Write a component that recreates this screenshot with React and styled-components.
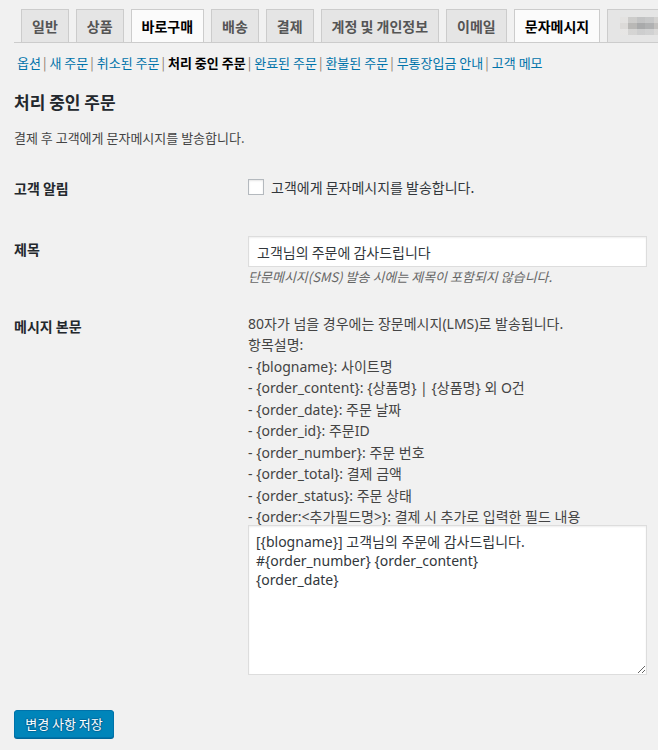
import React from 'react';
import styled, {createGlobalStyle} from 'styled-components';

const tabs = ['일반', '상품', '바로구매', '배송', '결제', '계정 및 개인정보', '이메일', '문자메시지'];
const activeTabs = ['바로구매', '문자메시지'];
const links = ['옵션', '새 주문', '취소된 주문', '처리 중인 주문', '완료된 주문', '환불된 주문', '무통장입금 안내', '고객 메모'];
const currentLink = '처리 중인 주문';

const fieldHelp = [
  ['{blogname}', '사이트명'],
  ['{order_content}', '{상품명} | {상품명} 외 O건'],
  ['{order_date}', '주문 날짜'],
  ['{order_id}', '주문ID'],
  ['{order_number}', '주문 번호'],
  ['{order_total}', '결제 금액'],
  ['{order_status}', '주문 상태'],
  ['{order:<추가필드명>}', '결제 시 추가로 입력한 필드 내용'],
];

const messageBody = '[{blogname}] 고객님의 주문에 감사드립니다.\n#{order_number} {order_content}\n{order_date}';

const App = () => {
  return (
    <Page>
      <GlobalStyle />
      <TabBar>
        {tabs.map((tab) => (
          <Tab key={tab} $active={activeTabs.includes(tab)}>
            {tab}
          </Tab>
        ))}
        <Tab>
          <Mosaic />
        </Tab>
      </TabBar>

      <SubNav>
        {links.map((link, index) => (
          <li key={link}>
            {link === currentLink ? <Current>{link}</Current> : <SubLink>{link}</SubLink>}
            {index < links.length - 1 && <Sep>|</Sep>}
          </li>
        ))}
      </SubNav>

      <Title>처리 중인 주문</Title>
      <Intro>결제 후 고객에게 문자메시지를 발송합니다.</Intro>

      <FormTable>
        <Row $pt={27}>
          <Th>고객 알림</Th>
          <Td>
            <CheckLabel>
              <CheckBox type="checkbox" />
              고객에게 문자메시지를 발송합니다.
            </CheckLabel>
          </Td>
        </Row>
        <Row $pt={36}>
          <Th>제목</Th>
          <Td>
            <TextInput defaultValue="고객님의 주문에 감사드립니다" />
            <Help>단문메시지(SMS) 발송 시에는 제목이 포함되지 않습니다.</Help>
          </Td>
        </Row>
        <Row $pt={28}>
          <Th>메시지 본문</Th>
          <Td>
            <Notes>
              <div>80자가 넘을 경우에는 장문메시지(LMS)로 발송됩니다.</div>
              <div>항목설명:</div>
              {fieldHelp.map(([key, desc]) => (
                <div key={key}>
                  - {key}: {desc}
                </div>
              ))}
            </Notes>
            <TextArea defaultValue={messageBody} />
          </Td>
        </Row>
      </FormTable>

      <Submit>
        <SaveButton>변경 사항 저장</SaveButton>
      </Submit>
    </Page>
  );
};
export default App;

const GlobalStyle = createGlobalStyle`
  html, body {
    margin: 0;
    background: #f1f1f1;
  }
  body {
    font-family: "Noto Sans", "Noto Sans CJK KR", sans-serif;
    font-size: 13px;
    color: #444;
  }
`;

const Page = styled.div`
  padding: 0 11px 0 14px;
  overflow: hidden;
`;

const TabBar = styled.nav`
  display: flex;
  flex-wrap: nowrap;
  padding-top: 9px;
  border-bottom: 1px solid #ccc;
  margin-right: -11px;
  overflow: hidden;
`;

const Tab = styled.span`
  flex: none;
  margin-left: 7px;
  margin-bottom: -1px;
  padding: 4px 10px;
  height: 24px;
  display: flex;
  align-items: center;
  font-family: "Noto Sans CJK KR", sans-serif;
  font-size: 14px;
  font-weight: 700;
  line-height: 24px;
  border: 1px solid #ccc;
  border-bottom-color: ${(p) => (p.$active ? '#fbfbfb' : '#ccc')};
  background: ${(p) => (p.$active ? '#fbfbfb' : '#e5e5e5')};
  color: ${(p) => (p.$active ? '#000' : '#555')};
`;

const Mosaic = styled.span`
  display: block;
  width: 60px;
  height: 18px;
  margin-left: 2px;
  background:
    linear-gradient(180deg, rgba(241, 241, 241, 0.35) 0 33%, transparent 33% 66%, rgba(241, 241, 241, 0.5) 66%),
    linear-gradient(90deg, #dcdad8 0 14%, #b9b8b6 14% 28%, #a9aaab 28% 42%, #b0b1b2 42% 56%, #c2c0be 56% 70%, #b8b7b5 70% 84%, #cfcecc 84%);
`;

const SubNav = styled.ul`
  list-style: none;
  display: flex;
  flex-wrap: wrap;
  margin: 10px 0 0 3px;
  padding: 0;
  font-family: "Noto Sans CJK KR", sans-serif;
  font-size: 13px;
  line-height: 20px;
`;

const SubLink = styled.a`
  color: #0073aa;
  text-decoration: none;
`;

const Current = styled.span`
  color: #000;
  font-weight: 700;
`;

const Sep = styled.span`
  color: #8a7a6a;
  margin: 0 3px 0 2px;
`;

const Title = styled.h2`
  margin: 17px 0 0;
  font-family: "Noto Sans CJK KR", sans-serif;
  font-size: 17px;
  font-weight: 700;
  line-height: 24px;
  color: #23282d;
`;

const Intro = styled.p`
  margin: 14px 0 0;
  font-family: "Noto Sans CJK KR", sans-serif;
  font-size: 13px;
  line-height: 20px;
  color: #444;
`;

const FormTable = styled.div`
  display: flex;
  flex-direction: column;
`;

const Row = styled.div`
  display: grid;
  grid-template-columns: 234px 1fr;
  padding-top: ${(p) => p.$pt}px;
`;

const Th = styled.div`
  padding-top: 1px;
  font-family: "Noto Sans CJK KR", sans-serif;
  font-size: 14px;
  font-weight: 700;
  line-height: 24px;
  color: #23282d;
`;

const Td = styled.div`
  display: flex;
  flex-direction: column;
  font-size: 14px;
  color: #444;
`;

const CheckLabel = styled.label`
  display: flex;
  align-items: center;
  gap: 7px;
  height: 24px;
  font-family: "Noto Sans CJK KR", sans-serif;
  font-size: 14px;
  color: #32373c;
`;

const CheckBox = styled.input`
  appearance: none;
  margin: 0;
  width: 16px;
  height: 16px;
  background: #fff;
  border: 1px solid #b4b9be;
  box-shadow: inset 0 1px 2px rgba(0, 0, 0, 0.1);
`;

const TextInput = styled.input`
  box-sizing: border-box;
  width: 100%;
  height: 31px;
  margin: 0;
  padding: 0 8px;
  background: #fff;
  border: 1px solid #ddd;
  box-shadow: inset 0 1px 2px rgba(0, 0, 0, 0.07);
  font-family: "Noto Sans CJK KR", sans-serif;
  font-size: 14px;
  color: #32373c;
  outline: none;
`;

const Help = styled.p`
  margin: 1px 0 0;
  font-family: "Noto Sans CJK KR", sans-serif;
  font-size: 13px;
  font-style: italic;
  line-height: 17px;
  color: #666;
`;

const Notes = styled.div`
  font-family: "Noto Sans", "Noto Sans CJK KR", sans-serif;
  font-size: 14px;
  line-height: 21.45px;
  color: #444;
`;

const TextArea = styled.textarea`
  box-sizing: border-box;
  width: 100%;
  height: 150px;
  margin: -3px 0 0;
  padding: 6px 7px;
  background: #fff;
  border: 1px solid #ddd;
  box-shadow: inset 0 1px 2px rgba(0, 0, 0, 0.07);
  font-family: "Noto Sans", "Noto Sans CJK KR", sans-serif;
  font-size: 14px;
  line-height: 19px;
  color: #32373c;
  resize: vertical;
  outline: none;
`;

const Submit = styled.p`
  margin: 35px 0 0;
  padding-bottom: 20px;
`;

const SaveButton = styled.button`
  height: 28px;
  padding: 0 10px;
  width: 100px;
  background: #0085ba;
  border: 1px solid #0073aa;
  border-radius: 3px;
  box-shadow: 0 1px 0 #006799;
  font-family: "Noto Sans CJK KR", sans-serif;
  font-size: 13px;
  line-height: 26px;
  color: #fff;
  text-shadow: 0 -1px 1px #006799, 1px 0 1px #006799, 0 1px 1px #006799, -1px 0 1px #006799;
`;
